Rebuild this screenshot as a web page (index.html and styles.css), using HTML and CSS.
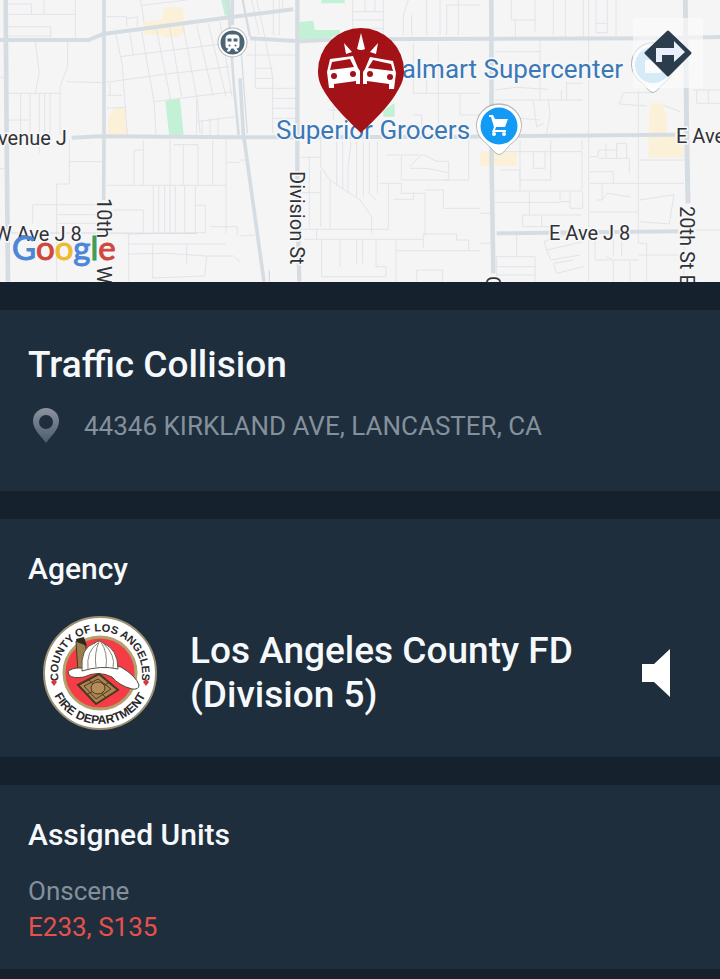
FILE: index.html
```html
<!DOCTYPE html>
<html lang="en">
<head>
<meta charset="utf-8">
<meta name="viewport" content="width=device-width, initial-scale=1">
<title>Traffic Collision</title>
<link rel="stylesheet" href="styles.css">
</head>
<body>
<main class="page">
  <section class="map" aria-label="Incident map">
    <svg class="map-canvas" viewBox="0 0 720 282" preserveAspectRatio="xMidYMid slice">
      <svg width="720" height="282" viewBox="0 0 2160 846">
        <g class="area-yellow">
          <path d="M325 350L345 322H375L384 405H325Z"/>
          <path d="M432 66L488 58L492 22H548L556 95L530 112H490L484 105L432 104Z"/>
          <path d="M1440 455H1550V498H1440Z"/>
          <path d="M1950 310H1986L2000 350V400H2050V472H1946V400Z"/>
        </g>
        <g class="area-green">
          <path d="M496 302L540 296L551 405L508 410Z"/>
          <path d="M664 0H690L694 46H674Z"/>
          <path d="M964 0H1034V10H964ZM896 66L940 62L944 90H1020V106L964 118L896 120ZM1150 330L1184 310V350H1150Z"/>
        </g>
        <g class="road-minor">
          <path d="M26 12H94V45M26 43H226M132 0V43M226 0V112M26 80H152V112M26 108H150M106 125L118 220L106 278M203 125V200L180 260V405M200 245L310 248L500 222L690 200M26 280H182M62 280V405M90 280V405M118 280V460M134 280V405M150 280V405M26 360H88M0 232H20M0 506H20M208 420V552H170V845M208 485H308M98 614H308M98 614V670M170 644H308M170 670H300M320 556H678M402 556V450H430M430 420V556M510 420V556M520 434H594V556M550 434V556M638 420V556M678 415V700M680 487H720M460 556V700M476 556V700M494 556V700M510 556V700M526 556V700M554 556V700M586 556V700M586 616H616V698L380 702M340 630H430V700M386 702V845M386 732H678M386 762L500 760L620 768L614 828L456 834M458 732V834M620 768H700L720 785M630 680H712V708M560 732V790"/>
          <path d="M420 0L425 16L560 0M320 50H380V80M380 55L410 52M425 16L432 70M348 105L366 190L382 405M390 100L400 165M360 170L720 125M425 95L462 305L468 405M470 90L512 300M510 85L545 290M550 80L592 300L600 400M590 75L640 290M625 70L678 290M660 65L696 290M460 305L700 275M590 300V405M606 360V405M630 355V405M654 350V405M590 365L706 350M320 286H366M320 325L374 322M412 48V80M330 250V285"/>
        </g>
        <g class="road-minor" transform="translate(720 0)">
          <path d="M50 0L70 90L98 230V400M100 0V105M118 0V105M128 0V40M35 0L58 105M20 165H170M46 205H98M46 235H98M48 265H170M98 295H170M98 325H170M98 355H170M46 120V265M338 0V100M338 35H430M338 60H430M338 85H430M375 0V35M405 0V35M430 0V105M505 0L490 45V105M515 45V105M560 0V105M600 0V105M620 15H720M655 0V105M620 15V105M520 130V280M595 130V400M520 280H720M520 230H560V280M280 290V360M265 330H290M520 345H545V395M660 280V345H720"/>
          <path d="M182 472H242M242 420V500L270 540L360 600L395 650V700M208 472V685M182 578H240M242 510V680M270 540V685M290 425V560M308 425V570M332 425V440L324 500V580M350 425V590M370 425V590M388 425V580L408 600M412 425V580M440 465H552L590 484H626V540H484V465M510 500L540 468M510 505H560L625 518M418 550H484V580H555V710M445 550V688H180M520 575V598H460M555 570H610V625H720M606 540H686M686 420V540M192 718H550M230 685V718M245 718V830H438V800H408V718M468 718V845M470 752H720M550 702H650V720H686V752M530 845V810H608V845M350 718V790M368 718V790M300 718V800M550 700V745M0 708L45 705M0 480H18"/>
        </g>
        <g class="road-minor" transform="translate(1440 0)">
          <path d="M94 0V60H165V95M106 60V115M165 0V60M220 0V105M256 0V115M310 0V115M326 0V845M348 0V98H382V0M348 70H382M408 0V110M45 155H180M180 120V300M45 270L110 262L205 268M45 300H308M205 300L210 345L200 400M244 270V300M260 245V300M260 250H308M160 305L170 380L190 370M430 278H520M418 312L430 278M418 312L500 318M550 315L600 335M640 270H720M650 270V310H720M685 270V310M120 420V570M60 510H120V540M45 455H306V570M195 455V505H160V455M212 420V540H120M306 450V420M330 470H354V450H410V430H440V475H354M378 430V475M410 430V475M440 475H448V520M330 515H400V550M330 550H612M475 275V730M475 480H612M45 573H305M148 573V645M45 607H240M240 573V605H270V575M270 605V625H308V575M128 645V680H208M185 645V680M128 645H305M330 636H475M350 600H366V550M380 580L450 590M380 580L366 600M480 600L582 584L568 672L480 665M110 700V770M45 770H165V845M50 800H165M50 825H165M50 770V845M192 725L230 710L300 700M192 725L200 750L310 725M200 750L212 780L300 765M220 790L230 820L310 800M220 790L280 780M345 700V780H475M400 700V770M425 700V770M380 770L400 780V845M450 785V845M475 730H500V845M475 765H600M612 700V845M640 690H720M0 730H30M0 640H30M180 360L120 355"/>
        </g>
        <g class="road-major">
          <path d="M0 120H265L310 102L700 50L880 28" stroke-width="12"/>
          <path d="M312 0V410L311 600" stroke-width="11"/>
          <path d="M17 0L20 430L24 845" stroke-width="14"/>
          <path d="M215 413L300 409L720 412H860L1400 410L1560 408L2025 404" stroke-width="12"/>
          <path d="M750 115L900 124L1020 118L1960 115L2160 111" stroke-width="12"/>
          <path d="M892 0V600L898 845" stroke-width="13"/>
          <path d="M1474 0L1475 500L1480 820" stroke-width="14"/>
          <path d="M2056 0L2060 400L2064 610" stroke-width="15"/>
          <path d="M1490 700L2035 694" stroke-width="12"/>
          <path d="M683 0L702 260L716 405" stroke-width="8"/>
          <path d="M697 0V75M720 235L730 400L792 845" stroke-width="11"/>
          <path d="M728 0L740 60L750 110" stroke-width="7"/>
          <path d="M724 160L742 400M808 810V845" stroke-width="4"/>
          <path d="M0 699H300L590 700" stroke-width="3"/>
        </g>
      </svg>

      <g class="street-label">
        <text x="-2" y="145">venue J</text>
        <text x="-6" y="241">W Ave J 8</text>
        <text x="549" y="240">E Ave J 8</text>
        <text x="676" y="143">E Ave J</text>
        <text transform="translate(97 198) rotate(90)">10th</text>
        <text transform="translate(97 266) rotate(90)">W</text>
        <text transform="translate(290 171) rotate(90)">Division St</text>
        <text transform="translate(680 206) rotate(90)">20th St E</text>
        <text transform="translate(486 276) rotate(90)">C</text>
      </g>
      <g class="place-label">
        <text x="379" y="78">Walmart Supercenter</text>
        <text x="276" y="139">Superior Grocers</text>
      </g>

      <g transform="translate(232.500 42.500)">
        <circle r="15" class="pin-shadow"/>
        <circle r="13" fill="#4d6474" stroke="#fff" stroke-width="2"/>
        <path fill="#fff" d="M-4-8H4Q7-7 7-4V3Q7 6 4 6L6 9H3L1 6H-1L-3 9H-6L-4 6Q-7 6-7 3V-4Q-7-7-4-8Z"/>
        <path fill="#4d6474" d="M-5-4H-1V-1H-5ZM1-4H5V-1H1Z"/>
        <circle cx="-3" cy="3" r="1" fill="#4d6474"/><circle cx="3" cy="3" r="1" fill="#4d6474"/>
      </g>

      <g transform="translate(499 126)">
        <path class="pin-shadow" d="M0 29C-4 29-9 20-15 16A23 22 0 1 1 15 16C9 20 4 29 0 29Z"/>
        <path fill="#fff" d="M0 28C-4 28-9 19-15 15A22 21 0 1 1 15 15C9 19 4 28 0 28Z"/>
        <circle r="18.500" fill="#129af4"/>
        <path fill="#fff" d="M-10-11H-6L-4-7H9L6 1H-3L-4 4H7V6H-7L-5 1L-8-9H-10Z"/>
        <circle cx="-5" cy="8" r="2" fill="#fff"/><circle cx="5" cy="8" r="2" fill="#fff"/>
      </g>
      <g transform="translate(653 65)">
        <path class="pin-shadow" d="M0 28C-4 28-9 19-15 15A22 22 0 1 1 15 15C9 19 4 28 0 28Z"/>
        <path fill="#fff" d="M0 27C-4 27-9 18-15 14A21 21 0 1 1 15 14C9 18 4 27 0 27Z"/>
        <circle r="18" fill="#8fcdf3"/>
        <path fill="#fff" d="M-8-5H8V8H-8Z"/>
      </g>

      <g transform="translate(300 20)">
        <path fill="#a31217" d="M61 113C54 106 33 87 24 71C19 63 18 57 18 51A43 43 0 0 1 104 51C104 58 102 64 97 72C89 87 68 106 61 113Z"/>
        <path fill="#fff" d="M61 13L65 29Q61 31 57 29ZM44 23L52 32L46 34ZM78 23L70 32L76 34Z"/>
        <path fill="#fff" fill-rule="evenodd" d="M30 39L53 36L58 48L60 51V64H56V61L34 64V68H29L27 52ZM32 42L30 50L54 47L50 39Z"/>
        <path fill="#fff" fill-rule="evenodd" d="M93 41L70 37L65 49L63 52V64H67V61L89 64V69H94L96 53ZM91 44L73 40L68 48L93 51Z"/>
        <g fill="#a31217"><circle cx="34" cy="56" r="3"/><circle cx="53" cy="54" r="3"/><circle cx="70" cy="54" r="3"/><circle cx="90" cy="57" r="3"/></g>
      </g>

      <text class="google" x="12" y="260"><tspan class="g-blue">G</tspan><tspan class="g-red">o</tspan><tspan class="g-yellow">o</tspan><tspan class="g-blue">g</tspan><tspan class="g-green">l</tspan><tspan class="g-red">e</tspan></text>
    </svg>
    <button class="directions" type="button" aria-label="Directions">
      <svg width="70" height="70" viewBox="0 0 70 70">
        <path fill="#2b3c4d" stroke="#2b3c4d" stroke-width="3" stroke-linejoin="round" d="M35 14L57 35L35 57L13 35Z"/>
        <path fill="#e9f0fb" d="M23 44V30H41V23L52 34L41 44V37H29V44Z"/>
      </svg>
    </button>
  </section>

  <section class="card incident">
    <h1>Traffic Collision</h1>
    <p class="address">
      <svg width="28" height="36" viewBox="0 0 28 36" aria-hidden="true">
        <defs><linearGradient id="pin" x1="0" y1="0" x2="0" y2="1"><stop offset="0" stop-color="#8b939e"/><stop offset="1" stop-color="#4d5c6d"/></linearGradient></defs>
        <path fill="url(#pin)" fill-rule="evenodd" d="M14 35C10 29 1 22 1 13A13 13 0 0 1 27 13C27 22 18 29 14 35ZM14 7A7 7 0 1 0 14 21A7 7 0 1 0 14 7Z"/>
      </svg>
      <span>44346 KIRKLAND AVE, LANCASTER, CA</span>
    </p>
  </section>

  <section class="card agency">
    <h2>Agency</h2>
    <div class="agency-row">
      <svg class="seal" width="116" height="116" viewBox="0 0 116 116" role="img" aria-label="County of Los Angeles Fire Department">
        <defs>
          <path id="arc-top" d="M22 80A42 42 0 1 1 94 80"/>
          <path id="arc-bottom" d="M7 58A51 51 0 0 0 109 58"/>
        </defs>
        <circle cx="58" cy="58" r="56" fill="#fff" stroke="#9b9171" stroke-width="2"/>
        <circle cx="58" cy="58" r="36" fill="#f43d46" stroke="#b3a06d" stroke-width="3"/>
        <text class="seal-text"><textPath href="#arc-top" startOffset="50%">COUNTY OF LOS ANGELES</textPath></text>
        <text class="seal-text seal-text-bottom"><textPath href="#arc-bottom" startOffset="50%">FIRE DEPARTMENT</textPath></text>
        <path fill="#d0393d" d="M12 64L15 67L12 71L9 67ZM104 64L107 67L104 71L101 67Z"/>
        <path fill="#9b7d4d" stroke="#46351f" d="M34 26L40 24L44 32L42 60L36 58Z"/>
        <path fill="#30271f" d="M34 24L42 22L45 31L35 27Z"/>
        <path fill="#fff" stroke="#514936" d="M26 56Q34 51 44 54Q65 48 79 52Q94 61 97 70Q97 75 90 74Q76 70 70 62Q56 55 42 62Q31 64 27 60Z"/>
        <path fill="#fff" stroke="#5c5342" d="M40 56Q38 32 53 28Q57 24 61 28Q76 34 76 54Q59 50 40 56Z"/>
        <path fill="none" stroke="#8e8775" d="M56 28Q44 36 46 54M57 27Q52 38 54 52M59 27Q66 38 64 52M61 28Q74 40 71 53"/>
        <path fill="#a98652" stroke="#4b371f" stroke-width="2" d="M36 70L57 59L76 75L54 89Z"/>
        <path fill="none" stroke="#4b371f" d="M42 71L56 64L69 74L54 84ZM46 64L64 83M68 67L44 80"/>
        <ellipse cx="56" cy="73" rx="7" ry="6" fill="#b68e59" stroke="#4b371f"/>
      </svg>
      <p class="agency-name">Los Angeles County FD (Division 5)</p>
      <button class="sound" type="button" aria-label="Play dispatch audio">
        <svg width="28" height="48" viewBox="0 0 28 48"><path fill="#fff" d="M0 15H12L28 0V48L12 33H0Z"/></svg>
      </button>
    </div>
  </section>

  <section class="card units">
    <h2>Assigned Units</h2>
    <p class="status">Onscene</p>
    <p class="unit-list">E233, S135</p>
  </section>
</main>
</body>
</html>
```
FILE: styles.css
```css
* { box-sizing: border-box; }
body {
  margin: 0;
  background: #15222e;
  color: #f6f9fb;
  font-family: Roboto, "Liberation Sans", sans-serif;
}
h1, h2, p { margin: 0; font-weight: 500; }
.page { display: flex; flex-direction: column; gap: 28px; }
.map { position: relative; height: 282px; background: #f5f5f6; overflow: hidden; }
.map-canvas { display: block; width: 100%; height: 100%; }
.area-yellow { fill: #fbf0d8; }
.area-green { fill: #c3f1d5; }
.road-minor { fill: none; stroke: #e1e4e8; stroke-width: 3; }
.road-major { fill: none; stroke: #d6dde2; }
.street-label text {
  font-size: 20px;
  fill: #303236;
  stroke: #f8f8f9;
  stroke-width: 3px;
  paint-order: stroke;
}
.place-label text {
  font-size: 26px;
  fill: #3b78b8;
  stroke: #f8f8f9;
  stroke-width: 3px;
  paint-order: stroke;
}
.pin-shadow { fill: #8b9096; opacity: .6; }
.google { font-family: Lato, sans-serif; font-size: 33px; font-weight: 400; stroke-width: 1px; }
.g-blue { fill: #4c86d8; stroke: #4c86d8; }
.g-red { fill: #d0473f; stroke: #d0473f; }
.g-yellow { fill: #edbb2c; stroke: #edbb2c; }
.g-green { fill: #3f9b55; stroke: #3f9b55; }
button { padding: 0; border: 0; background: none; cursor: pointer; }
.directions {
  position: absolute;
  top: 18px;
  right: 17px;
  width: 70px;
  height: 70px;
  background: rgba(250, 250, 251, .65);
}
.directions svg, .sound svg { display: block; }
.card { padding: 32px 28px; background: #1e2e3d; }
h1 { font-size: 37px; line-height: 46px; }
h2 { font-size: 30px; line-height: 36px; }
.incident { padding-bottom: 47px; }
.address {
  display: flex;
  align-items: center;
  gap: 24px;
  margin-top: 20px;
  margin-left: 4px;
  color: #84909c;
  font-size: 26px;
  line-height: 36px;
  font-weight: 400;
}
.agency { padding-bottom: 26px; }
.agency-row { display: flex; align-items: center; margin-top: 28px; padding: 0 22px 0 14px; }
.seal { flex: none; }
.seal-text {
  font-family: "Liberation Sans", sans-serif;
  font-size: 11px;
  font-weight: 700;
  text-anchor: middle;
  fill: #2b2929;
}
.seal-text-bottom { font-size: 12px; }
.agency-name { flex: 1; margin: 0 32px; font-size: 37px; line-height: 44px; }
.sound { flex: none; }
.units { padding-bottom: 24px; }
.status, .unit-list { font-size: 26px; line-height: 36px; font-weight: 400; }
.status { margin-top: 20px; color: #84909c; }
.unit-list { color: #e8504c; }
```
